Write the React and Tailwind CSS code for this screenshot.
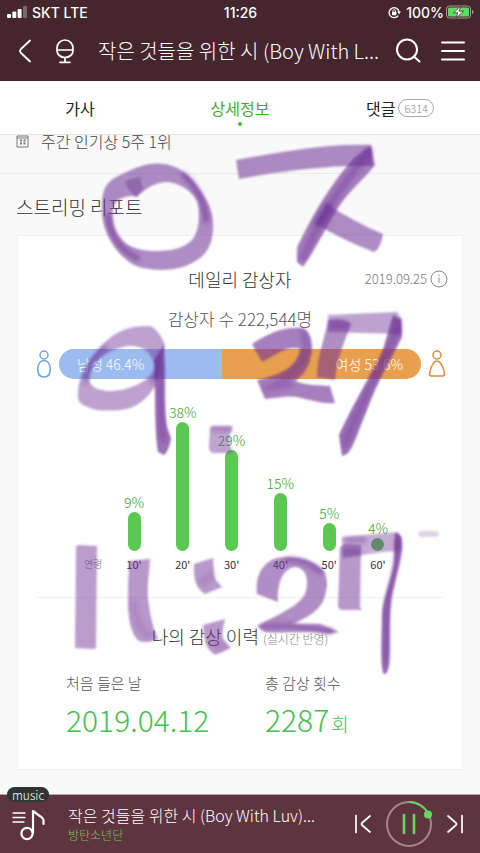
const ageData = [
  { label: "10'", value: 9, height: 39 },
  { label: "20'", value: 38, height: 129 },
  { label: "30'", value: 29, height: 101 },
  { label: "40'", value: 15, height: 58 },
  { label: "50'", value: 5, height: 28 },
  { label: "60'", value: 4, height: 13 },
];

const StatusBar = () => {
  return (
    <div className="flex h-6 items-center justify-between pl-[7px] pr-[6px] font-['Inter',sans-serif] text-[14px] font-medium">
      <div className="flex flex-1 items-center gap-[5px]">
        <svg width="20" height="12" viewBox="0 0 20 12" fill="currentColor" aria-hidden="true">
          <rect x="0" y="8" width="4" height="4" rx="1" />
          <rect x="5.3" y="5.5" width="4" height="6.5" rx="1" />
          <rect x="10.6" y="3" width="4" height="9" rx="1" />
          <rect x="16" y="0" width="4" height="12" rx="1" opacity="0.3" />
        </svg>
        <span>SKT LTE</span>
      </div>
      <span>11:26</span>
      <div className="flex flex-1 items-center justify-end gap-[2px]">
        <svg className="mr-[3px]" width="13" height="13" viewBox="0 0 13 13" fill="none" stroke="currentColor" aria-hidden="true">
          <path d="M10.2 9.6A5 5 0 1 1 11.1 6" strokeWidth="1.3" />
          <path d="M9 5.6h4l-2 2.6z" fill="currentColor" stroke="none" />
          <rect x="4" y="5.8" width="4.4" height="3.4" rx="0.6" fill="currentColor" stroke="none" />
          <path d="M4.9 6V4.9a1.3 1.3 0 0 1 2.6 0V6" strokeWidth="0.9" />
        </svg>
        <span>100%</span>
        <svg width="28" height="14" viewBox="0 0 28 14" aria-hidden="true">
          <rect x="0.5" y="1" width="24" height="12" rx="3" fill="none" stroke="#a9979b" />
          <rect x="2" y="2.5" width="21" height="9" rx="1.6" fill="#61d863" />
          <path d="M26 5v4c2-.6 2-3.4 0-4z" fill="#a9979b" />
          <path d="M15 .8 7.5 7.8h4.3L10 13.2l7.5-7H13z" fill="#fff" stroke="#46262d" strokeWidth="0.8" />
        </svg>
      </div>
    </div>
  );
};

const Header = () => {
  return (
    <div className="bg-[#46262d] pb-2 text-white">
      <StatusBar />
      <div className="flex h-[49px] items-center pt-1 pl-[18px] pr-[15px]">
        <button aria-label="뒤로" className="w-[36px]">
          <svg width="14" height="24" viewBox="0 0 14 24" fill="none" stroke="currentColor" strokeWidth="1.8" strokeLinecap="round">
            <path d="M12 1.5 3 10Q1.200 12 3 14l9 8.500" />
          </svg>
        </button>
        <button aria-label="노래방" className="w-[44px]">
          <svg width="22" height="26" viewBox="0 0 22 26" fill="none" stroke="currentColor" strokeWidth="1.7" strokeLinecap="round">
            <path d="M3 10a8 8 0 0 1 16 0v2.500c0 4-3.500 7-8 7s-8-3-8-7zM3 12h16M11 20v4M6 24.300h10" />
          </svg>
        </button>
        <h1 className="min-w-0 flex-1 text-[20px] leading-[30px] font-light whitespace-nowrap">
          작은 것들을 위한 시 (Boy With L...
        </h1>
        <button aria-label="검색" className="shrink-0">
          <svg width="26" height="26" viewBox="0 0 26 26" fill="none" stroke="currentColor" strokeWidth="2" strokeLinecap="round">
            <circle cx="12" cy="11.500" r="10" />
            <path d="m19 18.500 5.500 5" />
          </svg>
        </button>
        <button aria-label="메뉴" className="ml-[20px] shrink-0">
          <svg width="24" height="20" viewBox="0 0 24 20" fill="none" stroke="currentColor" strokeWidth="2" strokeLinecap="round">
            <path d="M1 1.500h22M1 10h22M1 18.500h22" />
          </svg>
        </button>
      </div>
    </div>
  );
};

const Tabs = () => {
  return (
    <nav className="grid h-[54px] grid-cols-3 border-b border-[#e4e4e4] bg-white text-[16px] leading-6 text-[#222]">
      <button className="flex items-center justify-center">가사</button>
      <button className="relative flex items-center justify-center text-[#3dae34]">
        상세정보
        <span className="absolute bottom-[8px] left-1/2 size-1 -translate-x-1/2 rounded-full bg-[#42b53b]" />
      </button>
      <button className="flex items-center justify-center gap-[3px]">
        댓글
        <span className="flex h-[18px] items-center rounded-full border border-[#aaa] px-[5px] text-[11px] font-light text-[#888]">
          6314
        </span>
      </button>
    </nav>
  );
};

const GenderBar = () => {
  return (
    <div className="mt-[18px] flex items-center justify-between pr-[16px] pl-[18px]">
      <svg width="16" height="28" viewBox="0 0 16 28" fill="none" stroke="#6fa3e8" strokeWidth="1.5" aria-hidden="true">
        <circle cx="8" cy="5" r="4" />
        <path d="M8 10.500c-4 0-6.300 4-6.300 8.500 0 5 2.500 8 6.300 8s6.300-3 6.300-8c0-4.500-2.300-8.500-6.300-8.500z" />
      </svg>
      <div className="mx-[7px] flex h-[30px] flex-1 overflow-hidden rounded-full text-[14px] leading-[30px] font-light text-white">
        <div className="w-[45%] bg-[#9cbcf0] pl-[18px]">남성 46.4%</div>
        <div className="flex-1 bg-[#e9a04e] pr-[18px] text-right">여성 53.6%</div>
      </div>
      <svg width="18" height="28" viewBox="0 0 18 28" fill="none" stroke="#e08a3c" strokeWidth="1.5" aria-hidden="true">
        <circle cx="9" cy="5" r="4" />
        <path d="M9 11c-3.200 0-4.500 3-6 7-.8 2-1.500 4.300-1.500 6Q1.500 26 3.500 26h11q2 0 2-2c0-1.700-.7-4-1.500-6-1.500-4-2.800-7-6-7z" />
      </svg>
    </div>
  );
};

const AgeChart = () => {
  return (
    <div className="mt-6 flex h-[170px] items-end pr-[68px] pl-[52px]">
      <span className="w-[48px] pl-[14px] text-[10px] leading-[18px] font-light text-[#777]">연령</span>
      <div className="flex flex-1 justify-between">
        {ageData.map((age) => (
          <div key={age.label} className="flex w-8 flex-col items-center justify-end">
            <span className="text-[14px] leading-[20px] font-light text-[#35a82f]">{age.value}%</span>
            <div className="w-[13px] rounded-full bg-[#59c952]" style={{ height: age.height }} />
            <span className="mt-[4px] text-[11px] leading-[18px] text-[#333]">{age.label}</span>
          </div>
        ))}
      </div>
    </div>
  );
};

const ReportCard = () => {
  return (
    <section className="mx-[17px] border border-[#f1f1f1] bg-white pt-[29px] pb-[25px]">
      <div className="grid grid-cols-[1fr_auto_1fr] items-center px-[14px]">
        <h3 className="col-start-2 text-[18px] leading-7 text-[#333] font-light">데일리 감상자</h3>
        <div className="flex items-center justify-end gap-[3px] text-[13px] leading-5 font-light text-[#777]">
          2019.09.25
          <button aria-label="안내">
            <svg width="18" height="18" viewBox="0 0 18 18" fill="none" stroke="#888">
              <circle cx="9" cy="9" r="8" />
              <path d="M9 7.500V13M9 4.500V6" />
            </svg>
          </button>
        </div>
      </div>
      <p className="mt-[14px] text-center text-[17px] leading-6 font-light text-[#555]">감상자 수 222,544명</p>
      <GenderBar />
      <AgeChart />
      <div className="mx-[18px] mt-6 border-t border-[#f2f2f2] pt-6">
        <h3 className="text-center text-[18px] leading-7 font-light text-[#333]">
          나의 감상 이력 <small className="text-[12px] text-[#888]">(실시간 반영)</small>
        </h3>
        <dl className="mt-[18px] grid grid-cols-[199px_1fr] pl-[30px] font-light">
          <div>
            <dt className="text-[15px] leading-6 text-[#555]">처음 들은 날</dt>
            <dd className="mt-[4px] text-[30px] leading-10 text-[#45bf52]">2019.04.12</dd>
          </div>
          <div>
            <dt className="text-[15px] leading-6 text-[#555]">총 감상 횟수</dt>
            <dd className="mt-[4px] text-[30px] leading-10 text-[#45bf52]">
              2287<span className="ml-[2px] text-[19px]">회</span>
            </dd>
          </div>
        </dl>
      </div>
    </section>
  );
};

const Player = () => {
  return (
    <footer className="relative flex h-[59px] items-center border-t border-[#b9a4a8] bg-[#5e343e] pr-[16px] pl-[12px] text-white">
      <span className="absolute -top-[8px] left-[7px] flex h-[15px] items-center rounded-full bg-[#303434] px-[5px] text-[12px] font-light">
        music
      </span>
      <button aria-label="재생 목록">
        <svg width="34" height="34" viewBox="0 0 34 34" fill="none" stroke="currentColor" strokeLinecap="round">
          <path d="M1 6h12M1 10.500h12M1 15h11" strokeWidth="1.3" />
          <path d="M21 26V4l6 4.500q4.500 2.500 4.500 5v3.500" strokeWidth="2.200" strokeLinejoin="round" />
          <circle cx="15" cy="26.500" r="5.600" strokeWidth="2.200" />
        </svg>
      </button>
      <div className="ml-[22px] min-w-0 flex-1">
        <p className="text-[16px] leading-[22px] font-light whitespace-nowrap">작은 것들을 위한 시 (Boy With Luv)...</p>
        <p className="text-[12px] leading-[18px] font-light text-[#6ccb55]">방탄소년단</p>
      </div>
      <div className="ml-[26px] flex shrink-0 items-center">
        <button aria-label="이전 곡">
          <svg width="18" height="20" viewBox="0 0 18 20" fill="none" stroke="currentColor" strokeWidth="1.7" strokeLinecap="round">
            <path d="M2 1.500v17M16 2 8.500 8.500q-2 1.500 0 3L16 18" />
          </svg>
        </button>
        <button aria-label="일시정지" className="mx-[12px]">
          <svg width="50" height="50" viewBox="0 0 50 50" fill="none" strokeWidth="2">
            <circle cx="25" cy="25" r="22" stroke="#a6848d" />
            <path d="M25 3a22 22 0 0 1 19.500 12" stroke="#63d95a" />
            <circle cx="44" cy="15.500" r="4" fill="#63d95a" />
            <path d="M20 16v18M30 16v18" stroke="#63d95a" strokeWidth="2.600" strokeLinecap="round" />
          </svg>
        </button>
        <button aria-label="다음 곡">
          <svg width="18" height="20" viewBox="0 0 18 20" fill="none" stroke="currentColor" strokeWidth="1.7" strokeLinecap="round">
            <path d="M16 1.500v17M2 2l7.500 6.500q2 1.500 0 3L2 18" />
          </svg>
        </button>
      </div>
    </footer>
  );
};

// Marker pen drawn over the whole screen, darker where the strokes cross.
const MarkerInk = () => {
  return (
    <svg className="pointer-events-none absolute inset-x-0 top-0 z-20 w-full" viewBox="0 0 480 853" aria-hidden="true">
      <defs>
        <filter id="soft" x="-5%" y="-5%" width="110%" height="110%">
          <feGaussianBlur stdDeviation="1" />
        </filter>
        <filter id="shade" x="-5%" y="-5%" width="110%" height="110%">
          <feGaussianBlur stdDeviation="2" />
        </filter>
      </defs>

      <g fill="#6f3296" filter="url(#soft)">
        <path fillRule="evenodd" opacity="0.56" d="M102 207C102 190 106 181 120 175 138 167 148 162 163 164 178 165 190 175 200 190 208 202 214 212 213 230 212 248 204 258 190 264 176 271 158 271 143 268 127 265 113 248 107 233 103 224 102 215 102 207ZM113 207C112 220 113 228 119 236 125 246 137 250 153 251 170 251 183 249 192 240 199 232 200 216 198 203 194 193 183 184 168 182 156 181 143 190 137 197 130 194 116 198 113 207Z" />
        <path opacity="0.4" d="M125 181 140 177 143 190 136 197 128 189Z" />
        <path opacity="0.56" d="M236 160 239 179C285 170 325 167 347 166L373 166 371 145C330 143 285 151 236 160Z" />
        <path opacity="0.62" d="M371 146 375 165C362 181 350 190 340 205 328 223 317 247 303 267L297 262 297 247C311 219 325 193 347 166 355 156 363 151 371 146Z" />
        <path opacity="0.55" d="M327 204C345 216 364 226 383 234 382 241 379 250 374 252 350 243 332 233 316 224Z" />

        <path fillRule="evenodd" opacity="0.46" d="M78 397C77 378 88 360 103 344 117 330 132 325 150 326 157 329 162 337 165 345L155 386C148 399 135 409 120 410 107 411 97 411 90 408 82 405 78 402 78 397ZM90 383C94 389 101 391 112 391 129 390 145 383 152 373 157 366 153 360 149 354 145 347 137 346 128 346 115 348 101 355 95 363 90 370 88 378 90 383Z" />
        <path opacity="0.7" d="M154 360 164 345C166 372 163 404 167 427L171 438C170 446 167 453 164 455L158 452C154 427 156 390 154 360Z" />
        <path opacity="0.62" d="M252 344C268 333 285 326 303 328 312 333 314 347 310 360 307 371 301 377 295 381 307 386 320 385 330 386L335 403C316 405 301 394 283 397L265 399 257 380C280 375 298 367 300 349 288 344 272 357 262 362Z" />
        <path opacity="0.46" d="M328 315 397 312 402 320 402 334 328 332Z" />
        <path opacity="0.7" d="M393 315 401 320 402 337C393 356 378 379 367 410 358 431 354 447 347 454L342 456 339 435C356 398 374 371 383 350Z" />
        <path opacity="0.55" d="M328 320C338 318 348 320 351 324 346 339 337 356 335 380L317 377C317 356 325 338 328 320Z" />
        <path opacity="0.45" d="M210 428Q210 426 213 426H232V431L230 433C230 443 229 446 233 452L230 453H213Q209 452 209 447Z" />

        <path opacity="0.48" d="M76 547Q76 545 79 545L97 546 96 647Q96 649 92 649L75 648Z" />
        <path opacity="0.5" d="M129 561 150 559C149 577 146 590 149 606 151 620 154 630 158 639 151 642 144 643 139 641 127 631 128 604 128 590Z" />
        <path opacity="0.5" d="M194 564 213 558 214 573C214 580 218 582 222 587L205 594C197 589 193 580 194 564Z" />
        <path opacity="0.5" d="M203 625 225 619C223 628 221 635 224 640L231 648 215 655C206 649 205 642 204 634Z" />
        <path opacity="0.55" d="M257 594C255 575 263 562 277 558 292 555 309 558 320 567 329 575 328 587 324 599 319 611 308 617 293 624L320 624 339 632 329 634C306 629 286 634 265 632L257 626C277 615 298 607 305 594 309 584 308 570 297 567 284 567 277 580 278 602Z" />
        <path opacity="0.4" d="M342 537 398 532 402 538 400 551 383 552 343 558Z" />
        <path opacity="0.5" d="M340 547 345 544 361 545 360 607 362 610 341 610 338 607Z" />
        <path opacity="0.72" d="M395 533C401 533 403 539 402 550 400 565 395 580 392 595 388 620 391 645 389 666Q387 675 384 674C380 670 382 635 382 614 384 591 396 571 394 551Z" />
        <path opacity="0.22" d="M420 531H437Q441 534 437 537H420Q416 534 420 531Z" />
      </g>

      <g fill="none" stroke="#6a2c91" strokeLinecap="round" filter="url(#shade)">
        <path d="M184 175C197 187 205 202 206 220M108 216C110 234 120 250 137 258" strokeWidth="6" opacity="0.5" />
        <path d="M369 151C354 171 338 189 327 211M303 257 326 210" strokeWidth="8" opacity="0.35" />
        <path d="M318 222 328 206" strokeWidth="9" opacity="0.4" />
        <path d="M86 382C87 366 97 355 105 347M152 382 161 367" strokeWidth="4" opacity="0.45" />
        <path d="M159 355C163 380 159 410 163 438" strokeWidth="5" opacity="0.35" />
        <path d="M304 333C313 355 298 371 277 383M267 388 289 384" strokeWidth="7" opacity="0.3" />
        <path d="M396 332C383 363 361 402 345 443" strokeWidth="6" opacity="0.3" />
        <path d="M334 325H347M398 321V331" strokeWidth="6" opacity="0.3" />
        <path d="M213 429H230" strokeWidth="4" opacity="0.35" />
        <path d="M287 560C300 558 311 564 321 572M263 627C288 623 308 629 331 631" strokeWidth="6" opacity="0.4" />
        <path d="M347 540H364M345 552H358" strokeWidth="6" opacity="0.35" />
        <path d="M397 540C400 558 388 588 387 610L386 661" strokeWidth="5" opacity="0.3" />
        <path d="M134 603C135 620 140 629 149 636M202 582 213 575M213 643 222 647" strokeWidth="7" opacity="0.15" />
      </g>
    </svg>
  );
};

const App = () => {
  return (
    <div className="relative flex min-h-screen flex-col overflow-hidden bg-[#f9f9f9] font-['Noto_Sans_CJK_KR',sans-serif]">
      <header className="relative z-10">
        <Header />
        <Tabs />
      </header>
      <main className="flex-1 pb-6">
        <div className="-mt-[8px] flex h-[47px] items-start gap-3 border-b border-[#ececec] pl-[16px] text-[16px] leading-7 font-light text-[#444]">
          <svg className="mt-2" width="13" height="13" viewBox="0 0 13 13" fill="none" stroke="#777" aria-hidden="true">
            <path d="M1 1h11v11H1zM1 3h11" />
            <path d="M4 5.500h2M7.500 5.500h2M4 8.500h2M7.500 8.500h2" strokeWidth="1.8" />
          </svg>
          주간 인기상 5주 1위
        </div>
        <h2 className="px-4 pt-[19px] pb-[14px] text-[19px] leading-7 font-light text-[#333]">스트리밍 리포트</h2>
        <ReportCard />
      </main>
      <Player />
      <MarkerInk />
    </div>
  );
};

export default App;
